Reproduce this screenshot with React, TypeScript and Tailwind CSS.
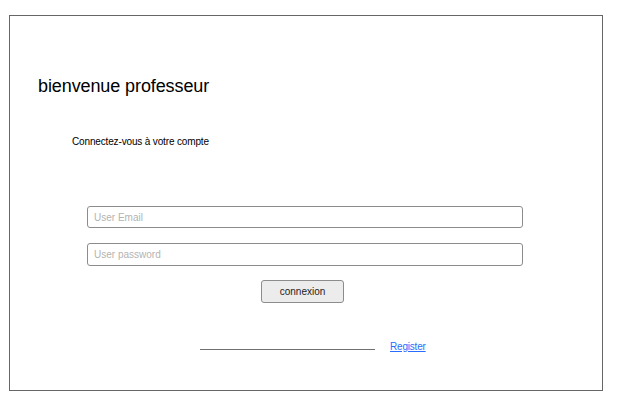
import React from 'react';

export default function App() {
  return <div className="w-[621px] h-[406px] bg-white pl-[9px] pt-[15px] font-['Liberation_Sans',Arial,sans-serif]">
      <div className="w-[594px] h-[376px] border border-[#666666] pl-[28px]">
        <h1 className="mt-[59px] text-[18px] leading-[22px] text-black tracking-[-0.1px]">bienvenue professeur</h1>
        <p className="mt-[39px] ml-[34px] text-[10px] leading-[12px] text-black tracking-[-0.15px]">Connectez-vous à votre compte</p>
        <div className="mt-[58px] ml-[49px] w-[436px] space-y-[15px]">
          <input
            type="email"
            placeholder="User Email"
            className="block w-full h-[22px] px-[6px] rounded-[3px] border border-[#8c8c8c] text-[10px] placeholder:text-[#b3b3b3] outline-none"
          />
          <input
            type="password"
            placeholder="User password"
            className="block w-full h-[23px] px-[6px] rounded-[3px] border border-[#8c8c8c] text-[10px] placeholder:text-[#b3b3b3] outline-none"
          />
        </div>
        <button className="block mt-[14px] ml-[223px] w-[83px] h-[23px] rounded-[3px] border border-[#8c8c8c] bg-[#ececec] text-[10px] text-[#222222]">
          connexion
        </button>
        <div className="mt-[37px] ml-[162px] flex items-start">
          <div className="mt-[9px] w-[175px] h-px bg-[#707070]" />
          <a href="#" className="ml-[15px] mt-[1px] text-[10px] leading-[12px] text-[#2a6cff] underline tracking-[-0.2px]">Register</a>
        </div>
      </div>
    </div>;
}
